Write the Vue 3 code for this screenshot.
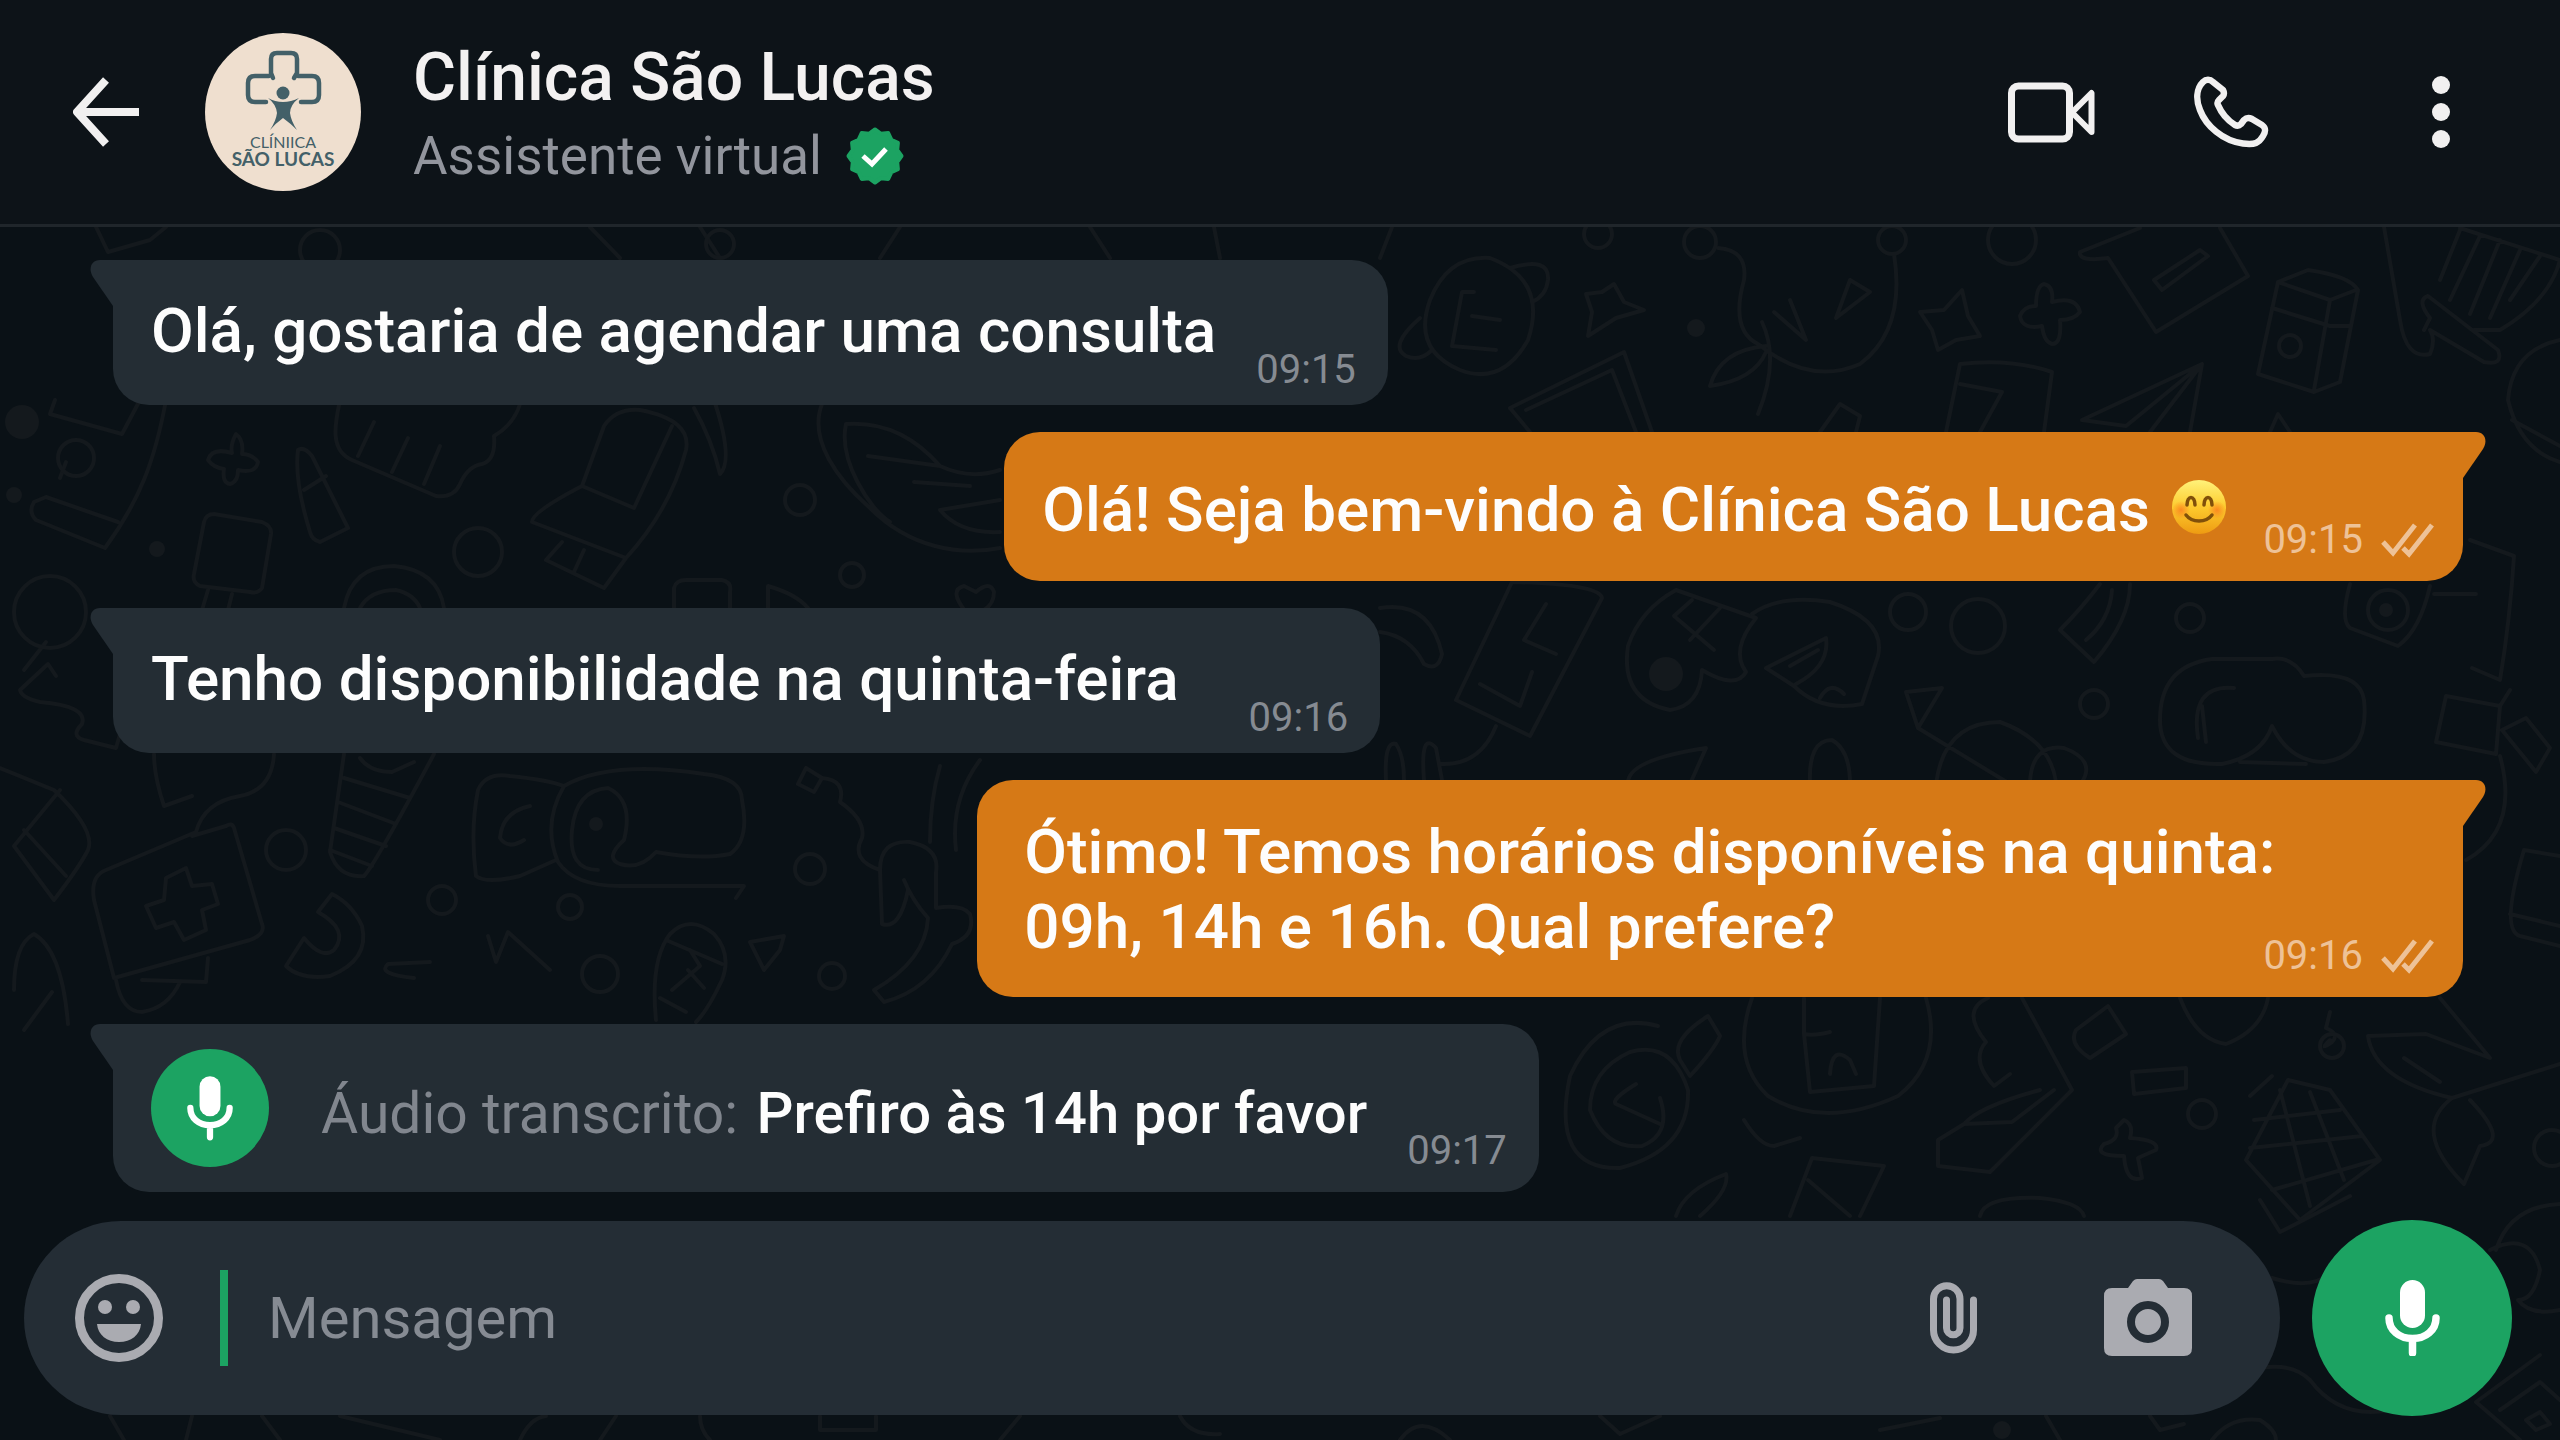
<template>
  <div class="chat">
    <header class="topbar">
      <button class="icon-btn" type="button" aria-label="Voltar">
        <svg width="66" height="70" viewBox="0 0 66 70" fill="none">
          <path d="M66 35H5M33 3L4 35L33 67" stroke="#f1f0f0" stroke-width="8" stroke-linejoin="round"/>
        </svg>
      </button>

      <svg class="avatar" width="156" height="158" viewBox="0 0 156 158">
        <ellipse cx="78" cy="79" rx="78" ry="79" fill="#efdfcf"/>
        <g fill="none" stroke="#436068" stroke-width="4.5" stroke-linecap="round">
          <path d="M68 45L66 40V26Q66 20 72 20H86Q92 20 92 26V40L89 45"/>
          <path d="M64 43H50Q43 43 43 50V62Q43 69 50 69H61"/>
          <path d="M93 43H107Q114 43 114 50V62Q114 69 107 69H96"/>
        </g>
        <circle cx="78" cy="60" r="6.5" fill="#436068"/>
        <path d="M63 65Q70 69 78 69Q86 69 94 65Q85 72 85 80Q86 88 92 97Q85 90 78 85Q71 90 65 97Q71 88 72 80Q71 71 63 65Z" fill="#436068"/>
        <text class="logo-small" x="78" y="115">CLÍNIICA</text>
        <text class="logo-big" x="78" y="133">SÃO LUCAS</text>
      </svg>

      <div class="identity">
        <h1>Clínica São Lucas</h1>
        <p>
          Assistente virtual
          <svg width="58" height="58" viewBox="-29 -29 58 58" aria-label="Verificado">
            <path :d="badgePath" fill="#1ca362" stroke="#1ca362" stroke-width="4" stroke-linejoin="round"/>
            <path d="M-12 0L-3 8L11 -7" fill="none" stroke="#fff" stroke-width="5"/>
          </svg>
        </p>
      </div>

      <nav class="actions">
        <button class="icon-btn" type="button" aria-label="Chamada de vídeo">
          <svg width="88" height="62" viewBox="0 0 88 62" fill="none" stroke="#f1f0f0" stroke-width="7" stroke-linejoin="round">
            <rect x="4.5" y="5" width="58" height="53" rx="7"/>
            <path d="M65 31.5L84.5 12V51Z" stroke-width="6"/>
          </svg>
        </button>
        <button class="icon-btn" type="button" aria-label="Ligar">
          <svg width="76" height="72" viewBox="0 0 76 72" fill="none" stroke="#f1f0f0" stroke-width="6.5" stroke-linejoin="round">
            <path d="M20 6C17 3 13 3 10 6C3 13 3 24 7 34C13 50 30 65 50 67.5C62 69 66 67 70 60C73 55 73 52 69 49L59 43C56 41.5 53 42 51 44L48 48C46 50 44 50 42 49C34 44 28 36 25 29C24 27 24 26 26 24L30 20C31.5 18 31 16 30 14Z"/>
          </svg>
        </button>
        <button class="icon-btn more" type="button" aria-label="Mais opções">
          <svg width="18" height="72" viewBox="0 0 18 72" fill="#f1f0f0">
            <circle cx="9" cy="9" r="9"/>
            <circle cx="9" cy="36" r="9"/>
            <circle cx="9" cy="63" r="9"/>
          </svg>
        </button>
      </nav>
    </header>

    <main class="thread">
      <svg class="wallpaper" viewBox="0 227 2560 1213" preserveAspectRatio="xMidYMin slice" aria-hidden="true">
        <path v-for="(d, i) in doodles" :key="i" :d="d"/>
        <circle v-for="(c, i) in rings" :key="'r' + i" :cx="c[0]" :cy="c[1]" :r="c[2]"/>
        <circle v-for="(c, i) in dots" :key="'d' + i" class="dot" :cx="c[0]" :cy="c[1]" :r="c[2]"/>
      </svg>

      <article v-for="(m, i) in messages" :key="i" class="bubble" :class="[m.mine ? 'out' : 'in', m.kind]">
        <svg class="tail" width="46" height="46" viewBox="0 0 46 46">
          <path d="M46 0H10C1 0 -2 9 3 17L23 46H46Z"/>
        </svg>
        <span v-if="m.kind === 'audio'" class="audio-icon">
          <svg width="46" height="66" viewBox="0 0 55 76" fill="none">
            <rect x="15" y="0" width="25" height="48" rx="12.5" fill="#fff"/>
            <path d="M4 38C4 50 14 58.5 27.5 58.5S51 50 51 38M27.5 59V73" stroke="#fff" stroke-width="7.5" stroke-linecap="round"/>
          </svg>
        </span>
        <p class="text">
          <span v-if="m.label" class="label">{{ m.label }}</span>
          {{ m.text }}
          <svg v-if="m.smile" class="emoji" width="56" height="56" viewBox="0 0 56 56" role="img" aria-label="😊">
            <defs>
              <linearGradient id="face" x1="0" y1="0" x2="0" y2="1">
                <stop offset="0" stop-color="#fff27a"/>
                <stop offset="0.5" stop-color="#fdcb2e"/>
                <stop offset="1" stop-color="#ee9b12"/>
              </linearGradient>
              <radialGradient id="cheek">
                <stop offset="0" stop-color="#fb7a1e" stop-opacity="0.8"/>
                <stop offset="1" stop-color="#fb7a1e" stop-opacity="0"/>
              </radialGradient>
            </defs>
            <circle cx="28" cy="28" r="27" fill="url(#face)"/>
            <circle cx="10" cy="31" r="9" fill="url(#cheek)"/>
            <circle cx="46" cy="31" r="9" fill="url(#cheek)"/>
            <g fill="none" stroke="#80500a" stroke-width="3.5" stroke-linecap="round">
              <path d="M16 26C16 16 24 16 24 26"/>
              <path d="M33 26C33 16 41 16 41 26"/>
              <path d="M15 36C21 44 35 44 41 36"/>
            </g>
          </svg>
        </p>
        <span class="meta">
          <time>{{ m.time }}</time>
          <svg v-if="m.mine" width="53" height="36" viewBox="0 0 53 36" fill="none" stroke="#eec297" stroke-width="5" aria-label="Entregue">
            <path d="M2 20L12 31L34 3M22 26L28 32L51 3"/>
          </svg>
        </span>
      </article>

      <form class="composer" @submit.prevent="send">
        <div class="field">
          <button class="icon-btn" type="button" aria-label="Emoji">
            <svg width="88" height="88" viewBox="0 0 88 88">
              <circle cx="44" cy="44" r="39.5" fill="none" stroke="#aaabb1" stroke-width="9"/>
              <circle cx="30" cy="33" r="7" fill="#aaabb1"/>
              <circle cx="58" cy="33" r="7" fill="#aaabb1"/>
              <path d="M22 50H66C65 61 56 68 44 68S23 61 22 50Z" fill="#aaabb1"/>
            </svg>
          </button>
          <span class="caret"></span>
          <input v-model="draft" type="text" placeholder="Mensagem" aria-label="Mensagem" />
          <button class="icon-btn clip" type="button" aria-label="Anexar">
            <svg width="48" height="72" viewBox="0 0 48 72" fill="none">
              <path d="M43.5 18V48A20 20 0 0 1 3.5 48V17A13.25 13.25 0 0 1 30 17V46A6.75 6.75 0 0 1 16.5 46V18" stroke="#aaabb1" stroke-width="7" stroke-linecap="round"/>
            </svg>
          </button>
          <button class="icon-btn" type="button" aria-label="Câmera">
            <svg width="88" height="78" viewBox="0 0 88 78" fill="#aaabb1">
              <path d="M33 0H55Q57 0 59 2L64 9H80Q88 9 88 17V69Q88 77 80 77H8Q0 77 0 69V17Q0 9 8 9H24L29 2Q31 0 33 0Z"/>
              <circle cx="44" cy="43" r="17" fill="none" stroke="#242d35" stroke-width="8"/>
            </svg>
          </button>
        </div>
        <button class="mic" type="submit" aria-label="Gravar áudio">
          <svg width="55" height="76" viewBox="0 0 55 76" fill="none">
            <rect x="15" y="0" width="25" height="48" rx="12.5" fill="#fff"/>
            <path d="M4 38C4 50 14 58.5 27.5 58.5S51 50 51 38M27.5 59V73" stroke="#fff" stroke-width="7.5" stroke-linecap="round"/>
          </svg>
        </button>
      </form>
    </main>
  </div>
</template>

<script setup>
import { ref } from 'vue'

const draft = ref('')

const messages = ref([
  { text: 'Olá, gostaria de agendar uma consulta', time: '09:15' },
  { text: 'Olá! Seja bem-vindo à Clínica São Lucas', time: '09:15', mine: true, smile: true, kind: 'greeting' },
  { text: 'Tenho disponibilidade na quinta-feira', time: '09:16', kind: 'roomy' },
  { text: 'Ótimo! Temos horários disponíveis na quinta:\n09h, 14h e 16h. Qual prefere?', time: '09:16', mine: true, kind: 'long' },
  { label: 'Áudio transcrito:', text: 'Prefiro às 14h por favor', time: '09:17', kind: 'audio' },
])

function send() {
  if (!draft.value.trim()) return
  const now = new Date().toTimeString().slice(0, 5)
  messages.value.push({ text: draft.value, time: now, mine: true })
  draft.value = ''
}

// twelve-pointed seal around the check mark
const badgePath = 'M' + Array.from({ length: 24 }, (_, i) => {
  const r = i % 2 ? 23 : 26.5
  const a = (i * Math.PI) / 12 - Math.PI / 2
  return `${(r * Math.cos(a)).toFixed(1)} ${(r * Math.sin(a)).toFixed(1)}`
}).join('L') + 'Z'

const doodles = [
  // left column
  'M55 400L50 414L122 434L140 400M166 400C155 460 140 500 105 548L36 520Q28 512 34 502L46 497L118 522M66 462L60 478',
  'M236 434Q230 445 232 453Q212 447 208 460Q214 468 224 469Q222 483 230 484Q238 482 238 470Q256 474 258 462Q252 454 242 454Q244 440 236 434Z',
  'M298 450Q304 446 312 456L348 528L320 542Q312 540 310 532Q294 480 298 450ZM304 490L326 476',
  'M214 514L262 522Q272 526 271 534L262 588Q258 594 250 592L200 586Q192 582 194 574L204 522Q206 514 214 514ZM208 590L202 610M232 594L228 610',
  'M340 400C336 420 328 450 352 460L436 496Q454 498 460 484Q468 466 482 464Q496 460 494 436Q514 424 520 404M374 422L358 456M408 438L392 472M440 446L424 484',
  'M582 486L604 426Q616 408 640 410Q692 420 686 450Q670 510 626 558L532 522Q532 512 582 486L634 508L672 426M626 558L604 588L546 560L562 542M584 550L574 572M694 408Q712 440 720 474Q734 460 714 400',
  'M822 404C808 440 838 480 870 508C910 548 960 556 1000 548M846 424C838 460 870 510 890 522M846 424Q900 420 940 466Q970 480 1000 470M868 456L940 466M914 482L970 486M1000 500L940 510Q960 534 1000 532',
  'M344 608Q352 566 394 566Q438 570 444 608M360 608Q370 590 396 590Q414 594 420 608',
  'M674 608V588Q676 580 686 580H722Q732 582 730 592V608M768 608V586Q796 594 808 608M966 612Q948 590 964 586Q972 590 976 592Q990 580 994 592Q994 604 984 610',
  'M46 642L24 670M56 676L48 664L20 690Q22 698 40 702Q88 706 82 724Q70 736 84 740L116 748L120 734',
  'M0 768Q20 776 54 790Q96 830 88 850Q80 866 54 900L14 846L60 790M24 830L66 876',
  'M154 754Q154 776 164 806L192 796M274 754Q272 790 240 796Q204 802 196 832L106 870Q90 876 94 900L114 978L250 940Q266 934 262 924L234 828Q232 822 226 826L192 836',
  'M166 878L186 868L192 886L212 884L218 904L202 910L206 930L184 940L174 922L156 928L146 906L164 900ZM116 980Q122 1012 142 1012Q168 1008 180 982M142 980L206 982L208 958M14 990Q14 944 34 934Q62 950 68 1024M52 992L24 1030',
  'M344 754L330 852Q338 878 364 876Q374 866 434 754M344 778L410 798M338 802L396 824M334 828L386 846M330 850L372 866M360 758Q370 772 392 772L414 762',
  'M478 790Q486 772 510 776Q548 780 564 786M478 790Q470 830 476 876Q486 884 520 876L556 860M564 786Q610 760 704 774Q742 778 742 800Q750 840 730 854Q700 860 656 852Q640 870 620 864Q604 858 624 840Q634 800 608 788Q576 790 572 830Q568 870 598 870M564 786Q542 824 558 862Q574 886 620 886H744L736 898M530 806Q502 812 500 838Q508 850 524 840',
  'M332 894L318 912Q350 930 334 950Q322 960 304 938L286 966Q300 980 330 976Q370 960 362 926Q352 904 332 894Z',
  'M430 962L388 964Q376 974 414 978M488 936L496 962L508 932L550 970M656 1020Q650 960 670 934Q690 914 714 934Q732 954 722 980Q708 1010 696 1022M666 940L722 964M660 998L686 1012M690 950L700 966L672 990M688 970L704 988',
  'M750 942L784 936L780 950L764 970ZM806 768L798 784L814 792L822 778L806 768M822 778Q846 780 840 802Q866 820 862 838Q850 860 880 870M880 870Q880 840 910 842Q940 848 936 872V908Q962 904 970 914Q976 936 952 944Q930 990 884 1002L874 990Q926 960 928 918Q912 900 904 880M880 870L882 924Q900 930 908 890M940 766Q930 800 930 842M980 760Q950 800 956 850',
  // top right
  'M1430 300Q1448 255 1490 258Q1548 280 1528 340Q1502 386 1460 370Q1412 350 1430 300M1510 268Q1550 256 1548 280Q1546 296 1532 302M1420 318Q1388 346 1406 356Q1420 362 1432 350M1474 292H1462L1452 346L1496 350M1472 316L1500 320',
  'M1614 284L1624 302L1644 310L1616 318L1588 336L1592 312L1586 294L1602 292Z',
  'M1718 248Q1748 250 1744 280Q1730 330 1758 344Q1810 386 1860 364Q1906 330 1894 254M1774 312L1806 340L1790 300M1836 318L1850 280L1870 292ZM1762 322Q1780 360 1758 414M1766 346Q1720 350 1710 386Q1754 380 1766 352',
  'M1962 290L1968 316L1980 336L1956 340L1938 350L1932 330L1920 312L1944 310Z',
  'M2044 284Q2054 286 2052 302Q2076 296 2080 312Q2074 320 2060 320Q2062 344 2052 344Q2044 342 2042 326Q2022 330 2020 316Q2024 306 2036 306Q2036 286 2044 284Z',
  'M2140 228L2080 252Q2078 262 2108 258L2156 332L2248 276L2220 228M2154 280L2200 250L2208 256L2162 290Z',
  'M2278 282L2308 270Q2350 276 2358 290L2340 382L2314 392L2258 374ZM2278 282L2330 300L2314 390M2330 300L2356 290M2272 308L2330 326H2350',
  'M2384 227L2400 320Q2406 360 2430 354Q2436 340 2430 330L2484 362Q2504 366 2498 350L2428 296Q2416 300 2430 318L2424 330M2460 228L2560 260Q2550 300 2500 330L2474 330M2480 236L2450 300M2500 240L2470 314M2520 250L2490 318M2540 256L2510 300M2460 230L2440 280',
  'M1510 408L1624 352L1652 432M1526 410L1612 370L1636 432M1510 408L1530 432',
  'M1946 432L1960 364Q2010 358 2052 372L2044 432M1960 384L2002 392L1980 432M2082 420L2202 364L2190 432M2082 420L2126 426L2202 364L2150 432M1820 432L1840 404L1860 416L1856 432M2270 432L2278 414L2290 432',
  'M2560 340Q2512 350 2508 400Q2520 450 2560 462M2512 420L2560 446M2470 540L2514 556Q2510 620 2500 680L2472 668M2434 594L2476 594',
  // right middle
  'M1380 608Q1430 600 1442 654Q1438 672 1424 664Q1410 636 1380 632M1512 582Q1600 584 1602 598L1530 736L1456 700ZM1546 604L1524 640L1556 654M1480 684L1520 706L1532 672',
  'M1676 590L1756 618Q1730 650 1746 672Q1736 690 1702 670Q1700 706 1670 710Q1620 700 1628 646Q1640 610 1676 590ZM1692 600L1674 616L1714 650M1720 608L1690 640',
  'M1752 614Q1780 594 1830 602Q1886 620 1878 656L1862 704Q1820 712 1794 686L1766 668L1826 638Q1830 666 1796 684M1790 666L1818 650M1820 698Q1830 680 1844 694',
  'M2100 584Q2080 610 2060 630L2094 662Q2130 620 2130 584M2112 590Q2110 620 2086 640',
  'M2212 659Q2160 666 2160 720Q2160 766 2222 764Q2262 756 2272 726Q2290 762 2324 762Q2370 756 2364 700Q2360 670 2304 676Q2292 656 2272 659H2212M2234 688Q2190 684 2198 738M2202 706L2206 742M2240 762L2306 764',
  'M2350 584Q2340 620 2350 628L2398 646Q2420 630 2430 586M2368 610A20 20 0 1 0 2408 610A20 20 0 1 0 2368 610',
  'M2446 696L2500 706L2496 754L2436 742ZM2500 706L2510 690M2502 730L2526 718L2550 748L2536 772ZM2500 756Q2520 830 2466 860M2524 850L2560 856M2524 850Q2500 930 2520 936L2560 946M2510 914L2560 926',
  'M1906 692L1942 688L1918 728ZM1918 728L2010 784M1936 784Q1944 722 2000 722Q2050 740 2056 782M2030 782Q2032 744 2064 748Q2096 760 2082 782M1628 784Q1626 760 1706 748L1690 784M1810 784Q1808 740 1832 740Q1850 750 1850 784M1496 726Q1480 766 1440 764M1386 780Q1384 740 1396 744Q1404 756 1404 780M1424 780Q1420 730 1436 748L1442 780',
  // lower right
  'M1658 1026Q1600 1010 1570 1076Q1550 1170 1620 1168Q1690 1150 1688 1090Q1672 1040 1630 1052Q1590 1070 1590 1110Q1606 1150 1642 1146Q1672 1134 1660 1098M1636 1084Q1610 1100 1616 1104L1660 1124M1708 1016Q1670 1040 1680 1060L1690 1076Q1714 1050 1720 1036Z',
  'M1752 998Q1730 1060 1768 1096Q1824 1130 1898 1096Q1944 1060 1926 998M1804 998V1034Q1814 1036 1830 1032M1804 1034L1810 1092L1874 1086L1880 998M1830 1074Q1832 1044 1850 1060L1856 1074M1988 998Q1960 1010 1986 1042Q1970 1060 1994 1086L2010 1074M2022 998L2072 1090L1990 1172L1938 1166V1140L1964 1124L2012 1122L2054 1090M1964 1124Q1980 1106 2040 1090',
  'M2108 1006L2076 1030Q2068 1044 2090 1058L2126 1034ZM2132 1072L2186 1068V1088L2134 1094ZM2124 1120Q2134 1124 2130 1138Q2160 1140 2156 1150Q2142 1156 2138 1158L2142 1178Q2126 1184 2124 1156Q2092 1156 2104 1144Q2120 1140 2116 1128Z',
  'M2288 1080L2330 1090L2380 1160L2300 1220L2246 1160ZM2254 1120L2340 1110M2250 1148L2362 1136M2272 1190L2376 1160M2280 1090L2310 1206M2310 1092L2344 1180M2250 1096L2272 1076',
  'M2180 998Q2196 1040 2226 1044Q2262 1030 2268 998M2330 1012L2326 1028Q2340 1034 2332 1042Q2318 1052 2330 1040M2440 998L2490 1058L2426 1034L2368 1036Q2374 1080 2452 1098L2560 1064M2452 1098Q2410 1130 2464 1184L2480 1146Q2510 1142 2470 1100M2404 1058L2440 1082M1744 1120Q1760 1146 1774 1146L1800 1138',
  'M1676 1216Q1684 1190 1726 1174Q1730 1190 1700 1216M1790 1216L1812 1158L1884 1166L1860 1216M1808 1180L1850 1216M1980 1216Q1984 1196 2040 1198Q2080 1202 2084 1216M2260 1200L2280 1232L2350 1196',
  // strip under the composer
  'M2272 1278Q2310 1290 2330 1274M2250 1370Q2290 1360 2310 1380Q2340 1420 2390 1410M2540 1355L2476 1402L2520 1440M2500 1410L2540 1382L2560 1400M2526 1420L2540 1412L2550 1424L2536 1430ZM2496 1250Q2510 1206 2560 1204M2490 1250Q2530 1230 2540 1270Q2534 1300 2518 1300Q2530 1316 2560 1310M2212 1440Q2230 1416 2260 1420Q2276 1430 2276 1440',
  'M110 1416L124 1440M192 1416L186 1440M262 1416L280 1440M340 1416L440 1440M520 1440Q530 1418 546 1416M600 1440L616 1416M700 1416Q700 1430 710 1440M820 1416V1430H876V1416M1000 1440L1020 1416M1180 1416Q1190 1436 1220 1434M1400 1440Q1420 1412 1450 1440M1600 1416L1620 1434L1660 1416M1880 1430L1940 1418M2046 1416L2060 1440M2150 1416L2160 1430L2184 1424',
  // top strip, visible above the first bubbles
  'M96 227L108 252L150 240L166 227M590 227L620 258M700 227L720 258M880 258L900 227M1090 227L1110 258M1214 227L1220 258M1380 258L1392 227',
]

const rings = [
  [478, 552, 24], [76, 458, 18], [50, 612, 36], [800, 500, 15], [852, 575, 12], [286, 850, 20], [442, 900, 14],
  [570, 907, 12], [600, 974, 18], [810, 869, 15], [832, 976, 13], [320, 250, 20], [720, 244, 14], [1700, 242, 16],
  [1598, 234, 14], [1892, 240, 14], [2012, 240, 24], [2290, 346, 11], [1908, 612, 18], [1978, 626, 27],
  [2190, 618, 14], [2094, 704, 14], [2202, 1114, 14], [2332, 1046, 12], [2552, 1148, 18],
]

const dots = [
  [22, 422, 17], [14, 495, 8], [157, 549, 8], [1696, 328, 9], [1666, 674, 17], [2386, 610, 7], [2002, 1430, 9], [596, 824, 7],
]
</script>

<style>
body {
  background: #0a1116;
}
</style>

<style scoped>
.chat {
  min-height: 100vh;
  display: flex;
  flex-direction: column;
  background: #0a1116;
  color: #fdfdfd;
  font-family: Roboto, 'Liberation Sans', sans-serif;
}

.topbar {
  display: flex;
  align-items: center;
  height: 224px;
  padding: 0 110px 0 73px;
  background: #0d1318;
  border-bottom: 3px solid #20262b;
}

.icon-btn {
  display: flex;
  flex-shrink: 0;
  padding: 0;
  border: none;
  background: none;
  cursor: pointer;
}

.avatar {
  flex-shrink: 0;
  margin-left: 66px;
}

.logo-small,
.logo-big {
  font-family: Lato, sans-serif;
  fill: #436068;
  text-anchor: middle;
}

.logo-small {
  font-size: 16px;
}

.logo-big {
  font-size: 19px;
  font-weight: 700;
}

.identity {
  flex: 1;
  margin-left: 52px;
  padding-top: 9px;
}

.identity h1,
.identity p {
  margin: 0;
  line-height: 78px;
}

.identity h1 {
  font-size: 66px;
  font-weight: 500;
  color: #f3f1f1;
}

.identity p {
  display: flex;
  align-items: center;
  gap: 24px;
  font-size: 53px;
  color: #92959d;
}

.actions {
  display: flex;
  align-items: center;
  gap: 98px;
}

.more {
  margin-left: 65px;
}

.thread {
  position: relative;
  flex: 1;
  display: flex;
  flex-direction: column;
  gap: 27px;
  padding: 33px 0 24px;
}

.wallpaper {
  position: absolute;
  inset: 0;
  width: 100%;
  height: 100%;
  fill: none;
  stroke: #14191d;
  stroke-width: 4;
  stroke-linejoin: round;
  stroke-linecap: round;
}

.wallpaper .dot {
  fill: #14191d;
  stroke: none;
}

.bubble {
  position: relative;
  display: flex;
  align-items: flex-end;
  border-radius: 36px;
}

.bubble.in {
  align-self: flex-start;
  margin-left: 113px;
  padding: 0 32px 0 38px;
  gap: 40px;
  border-top-left-radius: 0;
  background: #242d34;
}

.bubble.out {
  align-self: flex-end;
  margin-right: 97px;
  padding: 0 29px 0 38px;
  gap: 36px;
  border-top-right-radius: 0;
  background: #d67916;
}

.bubble.roomy {
  gap: 70px;
}

.bubble.long {
  padding-left: 47px;
  gap: 0;
}

.tail {
  position: absolute;
  top: 0;
}

.in .tail {
  left: -23px;
  fill: #242d34;
}

.out .tail {
  right: -23px;
  fill: #d67916;
  transform: scaleX(-1);
}

.text {
  margin: 0;
  padding: 33px 0 37px;
  font-size: 62px;
  font-weight: 500;
  line-height: 75px;
  white-space: pre-line;
}

.greeting .text {
  padding: 40px 0 34px;
}

.long .text {
  padding: 34px 0 33px;
}

.emoji {
  margin-left: 6px;
  vertical-align: -4px;
}

.audio .text {
  padding: 52px 0 41px;
  font-size: 58px;
}

.label {
  margin-right: 4px;
  font-size: 57px;
  font-weight: 400;
  color: #81868e;
}

.audio-icon {
  align-self: center;
  display: flex;
  align-items: center;
  justify-content: center;
  flex-shrink: 0;
  width: 118px;
  height: 118px;
  margin-right: 12px;
  border-radius: 50%;
  background: #1ca362;
}

.meta {
  display: flex;
  align-items: center;
  gap: 18px;
  padding-bottom: 11px;
  font-size: 40px;
  line-height: 48px;
  color: #868b92;
}

.out .meta,
.audio .meta {
  padding-bottom: 17px;
}

.out .meta {
  color: #eec297;
}

/* the stamp sits on the short last line, so it may tuck under the first one */
.long .meta {
  margin-left: -12px;
}

.composer {
  position: relative;
  display: flex;
  align-items: center;
  gap: 32px;
  margin-top: auto;
  padding: 0 48px 0 24px;
}

.field {
  flex: 1;
  display: flex;
  align-items: center;
  height: 194px;
  padding: 0 88px 0 51px;
  border-radius: 97px;
  background: #242d35;
}

.caret {
  width: 8px;
  height: 96px;
  margin: 0 40px 0 57px;
  background: #1ca362;
}

.field input {
  flex: 1;
  min-width: 0;
  padding: 0;
  border: none;
  outline: none;
  background: none;
  font-family: inherit;
  font-size: 58px;
  line-height: 75px;
  color: #fdfdfd;
}

.field input::placeholder {
  color: #868b93;
  opacity: 1;
}

.clip {
  margin-right: 126px;
}

.mic {
  display: flex;
  align-items: center;
  justify-content: center;
  width: 200px;
  height: 196px;
  padding: 0;
  border: none;
  border-radius: 50%;
  background: #1ca362;
  cursor: pointer;
}
</style>
